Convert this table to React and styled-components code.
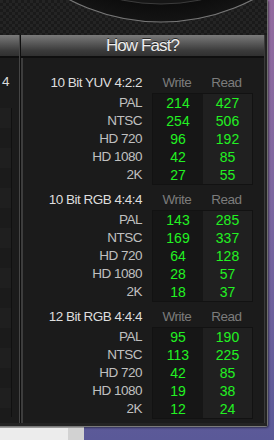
import React from "react";
import styled, { createGlobalStyle } from "styled-components";

const GlobalStyle = createGlobalStyle`
    html, body {
        margin: 0;
        padding: 0;
    }
    body {
        width: 274px;
        height: 440px;
        overflow: hidden;
        font-family: "Liberation Sans", Arial, sans-serif;
    }
`;

const Desktop = styled.div`
    width: 274px;
    height: 440px;
    display: flex;
    flex-direction: column;
    background: linear-gradient(180deg, #946b9f 0%, #7c66a0 45%, #5a5998 100%);
`;

const Window = styled.div`
    width: 267px;
    height: 426px;
    display: flex;
    flex-direction: column;
    background: #1b1b1b;
    border-right: 1px solid #6f6f6f;
    border-bottom: 1px solid #7a7a7a;
    border-bottom-right-radius: 3px;
    box-shadow: 1px 1px 2px rgba(0, 0, 0, 0.45);
`;

const Carbon = styled.div`
    height: 35px;
    flex: none;
    background-color: #1d1d1d;
    background-image: repeating-conic-gradient(#1a1a1a 0 25%, #242424 0 50%);
    background-size: 6px 6px;
    overflow: hidden;
`;

const Panels = styled.div`
    flex: 1;
    display: flex;
    border-right: 2px solid #222;
    border-bottom: 3px solid #232323;
`;

const LeftPanel = styled.div`
    width: 19px;
    display: flex;
    flex-direction: column;
    border-right: 1px solid #454545;
`;

const RightPanel = styled.div`
    flex: 1;
    display: flex;
    flex-direction: column;
    border-left: 1px solid #0e0e0e;
    box-shadow: inset 2px 0 0 #3d3d3d;
    border-right: 1px solid #3a3a3a;
`;

const Header = styled.div`
    height: 21px;
    flex: none;
    display: flex;
    align-items: center;
    justify-content: center;
    background: linear-gradient(180deg, #7a7a7a 0%, #5c5c5c 35%, #3a3a3a 75%, #303030 100%);
    border-bottom: 2px solid #0f0f0f;
    color: #ededed;
    font-size: 17px;
    letter-spacing: -0.9px;
    text-shadow: 0 -1px 0 rgba(0, 0, 0, 0.6);
`;

const LeftBody = styled.div`
    flex: 1;
    display: flex;
    flex-direction: column;
    padding-top: 13px;
`;

const LeftCut = styled.div`
    height: 22px;
    line-height: 22px;
    padding-left: 2px;
    color: #dcdcdc;
    font-size: 13.5px;
`;

const LeftBox = styled.div`
    width: 11px;
    flex: 1;
    margin: 15px 0 6px;
    border-right: 1px solid #101010;
    background: repeating-linear-gradient(180deg, #1f1f1f 0 20px, #1b1b1b 20px 40px);
`;

const RightBody = styled.div`
    flex: 1;
    display: flex;
    flex-direction: column;
    gap: 3px;
    padding: 13px 0 0 2px;
`;

const Section = styled.div`
    display: flex;
    flex-direction: column;
`;

const TitleRow = styled.div`
    display: grid;
    grid-template-columns: 119px 10px 50px 49px;
    height: 22px;
    align-items: center;
    font-size: 13.5px;
    letter-spacing: -0.5px;
`;

const Title = styled.div`
    grid-column: 1;
    text-align: right;
    color: #dedede;
`;

const ColHead = styled.div`
    text-align: center;
    color: #7c7c7c;
    grid-column: ${(p) => p.$col};
`;

const Table = styled.div`
    display: flex;
`;

const Labels = styled.div`
    width: 119px;
    margin-right: 10px;
    padding-top: 1px;
    display: flex;
    flex-direction: column;
`;

const Label = styled.div`
    height: 18px;
    line-height: 18px;
    text-align: right;
    color: #c0c0c0;
    font-size: 13.5px;
    letter-spacing: -0.5px;
`;

const Box = styled.div`
    display: grid;
    grid-template-columns: 50px 49px;
    grid-auto-rows: 18px;
    border: 1px solid #121212;
`;

const Cell = styled.div`
    line-height: 18px;
    text-align: center;
    color: #22f222;
    font-size: 14px;
    background: ${(p) => (p.$read ? "#202020" : "#161616")};
`;

const BottomStrip = styled.div`
    flex: 1;
    display: flex;
`;

const Pane = styled.div`
    width: ${(p) => p.$w}px;
    background: ${(p) => p.$bg};
    border-top: 1px solid #9a9a9a;
`;

const sections = [
    {
        title: "10 Bit YUV 4:2:2",
        rows: [
            ["PAL", 214, 427],
            ["NTSC", 254, 506],
            ["HD 720", 96, 192],
            ["HD 1080", 42, 85],
            ["2K", 27, 55],
        ],
    },
    {
        title: "10 Bit RGB 4:4:4",
        rows: [
            ["PAL", 143, 285],
            ["NTSC", 169, 337],
            ["HD 720", 64, 128],
            ["HD 1080", 28, 57],
            ["2K", 18, 37],
        ],
    },
    {
        title: "12 Bit RGB 4:4:4",
        rows: [
            ["PAL", 95, 190],
            ["NTSC", 113, 225],
            ["HD 720", 42, 85],
            ["HD 1080", 19, 38],
            ["2K", 12, 24],
        ],
    },
];

const Gauge = () => (
    <svg width="267" height="35" viewBox="0 0 267 35">
        <defs>
            <radialGradient id="ring" cx="0.5" cy="0.5" r="0.5">
                <stop offset="0.9" stopColor="#0c0c0c" />
                <stop offset="1" stopColor="#141414" />
            </radialGradient>
        </defs>
        <circle cx="161" cy="-177" r="199" fill="url(#ring)" stroke="#777" strokeWidth="1.2" />
        <circle cx="161" cy="-190" r="194" fill="#161616" stroke="#3c3c3c" strokeWidth="1" />
    </svg>
);

const SpeedSection = ({ data }) => (
    <Section>
        <TitleRow>
            <Title>{data.title}</Title>
            <ColHead $col={3}>Write</ColHead>
            <ColHead $col={4}>Read</ColHead>
        </TitleRow>
        <Table>
            <Labels>
                {data.rows.map((r) => (
                    <Label key={r[0]}>{r[0]}</Label>
                ))}
            </Labels>
            <Box>
                {data.rows.map((r) => (
                    <React.Fragment key={r[0]}>
                        <Cell>{r[1]}</Cell>
                        <Cell $read>{r[2]}</Cell>
                    </React.Fragment>
                ))}
            </Box>
        </Table>
    </Section>
);

const App = () => {
    return (
        <Desktop>
            <GlobalStyle />
            <Window>
                <Carbon>
                    <Gauge />
                </Carbon>
                <Panels>
                    <LeftPanel>
                        <Header />
                        <LeftBody>
                            <LeftCut>4</LeftCut>
                            <LeftBox />
                        </LeftBody>
                    </LeftPanel>
                    <RightPanel>
                        <Header>How Fast?</Header>
                        <RightBody>
                            {sections.map((s) => (
                                <SpeedSection key={s.title} data={s} />
                            ))}
                        </RightBody>
                    </RightPanel>
                </Panels>
            </Window>
            <BottomStrip>
                <Pane $w={68} $bg="#ececec" />
                <Pane $w={16} $bg="#d2d2d2" />
            </BottomStrip>
        </Desktop>
    );
};

export default App;
